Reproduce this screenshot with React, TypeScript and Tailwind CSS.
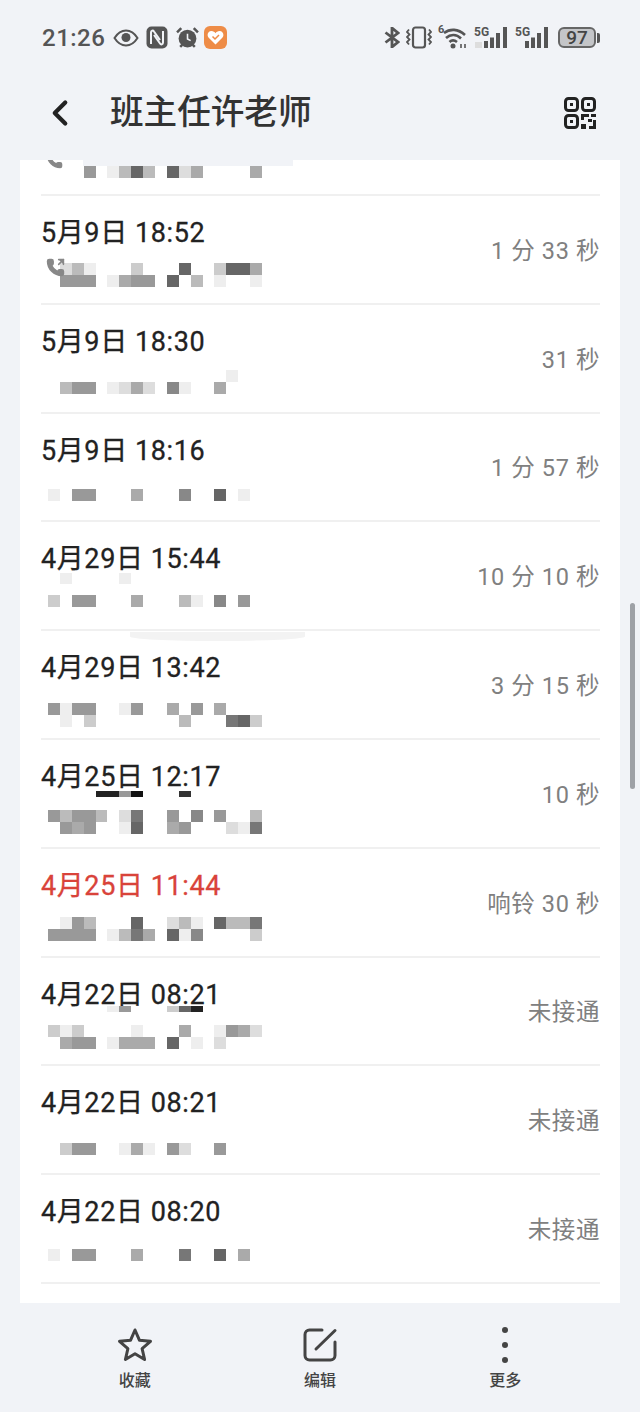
import { ChevronLeft, PhoneOutgoing } from "lucide-react";

type Line = [string, number];
type Call = { time: string; dur: string; top: number; lines: Line[]; missed?: boolean };

const calls: Call[] = [
  { time: "5月9日 18:52", dur: "1 分 33 秒", top: 15, lines: [[".dbe...c...6..c66a", 12], [".999.ea99.6fb.e..e", 12]] },
  { time: "5月9日 18:30", dur: "31 秒", top: 13, lines: [["f.f........f...ef.", 12], [".b99.edad.8e..a...", 12]] },
  { time: "5月9日 18:16", dur: "1 分 57 秒", top: 23, lines: [["e.99...a..f8f.6.e.", 12]] },
  { time: "4月29日 15:44", dur: "10 分 10 秒", top: -1, lines: [[".ef...e...........", 11], ["", 11], ["c.99...a..fbe.8.9.", 12]] },
  { time: "4月29日 13:42", dur: "3 分 15 秒", top: 20, lines: [["9e99ffe9..a.9.a...", 12], [".efc...f..fb...76c", 12]] },
  { time: "4月25日 12:17", dur: "10 秒", top: -1, lines: [["....2291..f3......", 6], ["", 13], ["9b99bfd7..9.8.9..b", 12], [".9a9.fe6..a9...de7", 12]] },
  { time: "4月25日 11:44", dur: "响铃 30 秒", top: 16, missed: true, lines: [[".e9bf.f6..dbe.6bb7", 12], ["9999.eb7a.6e8.f..c", 12]] },
  { time: "4月22日 08:21", dur: "未接通", top: -4, lines: [[".....e9...c62.....", 6], ["", 13], ["cecf...e...a..e9ad", 12], [".a99.eaaa.6fe.d...", 12]] },
  { time: "4月22日 08:21", dur: "未接通", top: 25, lines: [[".c99.feae.9d..9...", 12]] },
  { time: "4月22日 08:20", dur: "未接通", top: 22, lines: [["e.99...a..f7f.6.a.", 12]] },
];

// blurred-out number, one hex digit per cell = grey level
function Mosaic({ lines, top }: { lines: Line[]; top: number }) {
  return (
    <div className="ml-[7px] flex flex-col" style={{ marginTop: top }}>
      {lines.map(([cells, h], i) => (
        <div key={i} className="flex" style={{ height: h }}>
          {cells.split("").map((c, j) => (
            <div key={j} className="w-[11.9px]" style={{ backgroundColor: c === "." ? "transparent" : `#${c}${c}${c}` }} />
          ))}
        </div>
      ))}
    </div>
  );
}

function StatusLeft() {
  return (
    <div className="flex items-center">
      <span className="text-[24px] font-medium tracking-[0.5px] text-[#555]">21:26</span>
      <svg className="ml-[8px]" width="26" height="18" viewBox="0 0 26 18" fill="none">
        <path d="M1.5 9C5 3.5 9 1.5 13 1.5S21 3.5 24.500 9C21 14.500 17 16.500 13 16.500S5 14.500 1.500 9Z" stroke="#555" strokeWidth="2" />
        <circle cx="13" cy="8.500" r="4.500" fill="#555" />
      </svg>
      <svg className="ml-[7px]" width="22" height="23" viewBox="0 0 22 23" fill="none">
        <rect x="0.500" y="0.500" width="21" height="22" rx="5" fill="#555" />
        <path d="M5 18V6.500C5 4.500 7 4 8 5.500L14 14M17 5V16.500C17 18.500 15 19 14 17.500L8 9" stroke="#f1f3f7" strokeWidth="2" />
      </svg>
      <svg className="ml-[8px]" width="23" height="23" viewBox="0 0 22 22" fill="none">
        <circle cx="11" cy="12" r="8.500" fill="#555" />
        <path d="M11 7.500V12.500L14 14" stroke="#f1f3f7" strokeWidth="1.500" />
        <path d="M1 6L5 2M21 6L17 2M4 20L6 18M18 20L16 18" stroke="#555" strokeWidth="2.400" />
      </svg>
      <div className="ml-[5px] flex h-[23px] w-[23px] items-center justify-center rounded-[6px] bg-[#ee8c47]">
        <svg width="17" height="15" viewBox="0 0 17 15">
          <path d="M8.500 14.500L1.500 7.500C-.5 5 1 1 4.500 1C6.300 1 7.700 2 8.500 3.200C9.300 2 10.700 1 12.500 1C16 1 17.500 5 15.500 7.500Z" fill="#fff" />
          <path d="M5.500 6.500L8 9L12 5" stroke="#ee8c47" strokeWidth="1.500" fill="none" />
        </svg>
      </div>
    </div>
  );
}

function Signal({ idle }: { idle?: boolean }) {
  return (
    <div className="relative h-[22px] w-[35px]">
      <span className="absolute left-0 top-[-2px] text-[12px] font-bold leading-[14px] text-[#555]">5G</span>
      {idle && <span className="absolute left-[1px] top-[15px] h-[6px] w-[7px] bg-[#ddd]" />}
      <svg className="absolute right-0 top-0" width="26" height="22" viewBox="0 0 26 22" fill="#555">
        <rect x="1" y="14" width="4" height="7" />
        <rect x="7" y="10.500" width="4" height="10.500" />
        <rect x="13" y="6" width="4" height="15" />
        <rect x="20" y="0" width="4" height="21" />
      </svg>
    </div>
  );
}

function StatusRight() {
  return (
    <div className="flex items-center">
      <svg width="16" height="21" viewBox="0 0 16 21" fill="none" stroke="#555" strokeWidth="2.800">
        <path d="M1.500 5.500L14 15L8 20V1L14 6L1.500 15.500" />
      </svg>
      <svg className="ml-[6px]" width="26" height="23" viewBox="0 0 26 22" fill="none" stroke="#555" strokeWidth="1.800">
        <rect x="7" y="1" width="12" height="20" rx="2.500" strokeWidth="2.200" />
        <path d="M3 3L1 5.500L3.500 8L1 10.500L3.500 13L1 15.500L3 18" />
        <path d="M23 3L25 5.500L22.500 8L25 10.500L22.500 13L25 15.500L23 18" />
      </svg>
      <div className="relative ml-[6px] h-[22px] w-[30px]">
        <span className="absolute left-0 top-[-3px] text-[11px] font-bold leading-[12px] text-[#555]">6</span>
        <svg className="absolute left-0 top-0" width="30" height="22" viewBox="0 0 30 22" fill="none" stroke="#555" strokeWidth="2.600">
          <path d="M6 6C12 1.500 20 1.500 27 8" />
          <path d="M8 11C12.500 7 18.500 7 23 11.500" />
          <path d="M11.500 15C13.500 13 16.500 13 19 15" />
          <circle cx="15" cy="19" r="2.500" fill="#555" stroke="none" />
          <path d="M23 17V21M27 17V21" strokeWidth="1.600" />
        </svg>
      </div>
      <div className="ml-[6px]"><Signal idle /></div>
      <div className="ml-[6px]"><Signal /></div>
      <div className="ml-[8px] flex items-center">
        <div className="flex h-[21px] w-[38px] items-center justify-center rounded-[6px] border-2 border-[#666] bg-[#c4c5c8] text-[19px] font-medium leading-none text-[#444]">97</div>
        <div className="ml-[1px] h-[10px] w-[3px] rounded-r-[2px] bg-[#555]" />
      </div>
    </div>
  );
}

function QrIcon() {
  return (
    <svg width="32" height="32" viewBox="0 0 32 32" fill="none" stroke="#222" strokeWidth="3">
      <rect x="1.500" y="1.500" width="12" height="12" rx="3" />
      <rect x="18.500" y="1.500" width="12" height="12" rx="3" />
      <rect x="1.500" y="18.500" width="12" height="12" rx="3" />
      <g fill="#222" stroke="none">
        <rect x="6" y="6" width="3" height="3" />
        <rect x="23" y="6" width="3" height="3" />
        <rect x="6" y="23" width="3" height="3" />
        <path d="M17 17H25V20H20V23H17ZM27 17H32V20H27ZM24 22H28V25H24ZM29 23H32V32H25V29H29ZM17 27H22V32H17Z" />
      </g>
    </svg>
  );
}

function StarIcon() {
  return (
    <svg width="36" height="36" viewBox="0 0 36 36" fill="none" stroke="#444" strokeWidth="3" strokeLinejoin="round">
      <path d="M18 3L22.400 13.200L33.500 14.300L25.100 21.600L27.600 32.500L18 26.800L8.400 32.500L10.900 21.600L2.500 14.300L13.600 13.200Z" />
    </svg>
  );
}

function EditIcon() {
  return (
    <svg width="36" height="36" viewBox="0 0 36 36" fill="none" stroke="#444" strokeWidth="3" strokeLinecap="round">
      <path d="M20 3H7.500C5 3 3 5 3 7.500V28.500C3 31 5 33 7.500 33H28.500C31 33 33 31 33 28.500V15" />
      <path d="M33 3.500L14 22" />
    </svg>
  );
}

function More() {
  return (
    <div className="flex h-[36px] flex-col items-center justify-between">
      <span className="h-[6px] w-[6px] rounded-full bg-[#444]" />
      <span className="h-[6px] w-[6px] rounded-full bg-[#444]" />
      <span className="h-[6px] w-[6px] rounded-full bg-[#444]" />
    </div>
  );
}

export default function App() {
  return (
    <div className="relative flex h-[1412px] w-[640px] flex-col overflow-hidden bg-[#f1f3f7] [font-family:Roboto,'Noto_Sans_CJK_SC',sans-serif]">
      <div className="flex h-[75px] items-center justify-between pl-[42px] pr-[40px]">
        <StatusLeft />
        <StatusRight />
      </div>

      <div className="flex h-[85px] items-start justify-between pl-[42px] pr-[44px] pt-[17px]">
        <div className="flex items-center">
          <ChevronLeft size={42} strokeWidth={2.4} className="-ml-[3px] text-[#222]" />
          <h1 className="ml-[29px] text-[33.6px] font-medium leading-[38px] text-[#333]">班主任许老师</h1>
        </div>
        <div className="pt-[5px]"><QrIcon /></div>
      </div>

      <div className="relative mx-5 h-[1143px] overflow-hidden bg-white">
        <div className="ml-[21px] mr-[20px] flex h-[36px] border-b-2 border-[#f0f0f0]">
          <div className="mt-[6px] ml-[7px] flex h-[12px]">
            {"...9.eb6b.6da....a".split("").map((c, j) => (
              <div key={j} className="w-[11.9px]" style={{ backgroundColor: c === "." ? "transparent" : `#${c}${c}${c}` }} />
            ))}
          </div>
        </div>
        {calls.map((c, i) => (
          <div key={i} className="ml-[21px] mr-[20px] flex h-[108.8px] items-center justify-between border-b-2 border-[#f0f0f0]">
            <div className="flex h-full flex-col pt-[22px]">
              <div className={`h-[30px] whitespace-nowrap text-[27px] leading-[30px] tracking-[0.6px] [-webkit-text-stroke:0.3px] ${c.missed ? "text-[#d9433a]" : "text-[#222]"}`}>{c.time}</div>
              <Mosaic lines={c.lines} top={c.top} />
            </div>
            <div className="whitespace-nowrap pt-[4px] text-[23.5px] tracking-[0.6px] text-[#808080]">{c.dur}</div>
          </div>
        ))}
        {/* smudges left by the blur */}
        <div className="absolute left-[63px] top-0 h-[6px] w-[210px] bg-[#f1f3f7]" />
        <div className="absolute left-[110px] top-[472px] h-[9px] w-[175px] rounded-b-[50%] bg-[#f3f3f3]" />
        <PhoneOutgoing size={17} fill="#888" className="absolute left-[26px] top-[-8px] text-[#888]" />
        <PhoneOutgoing size={19} fill="#888" className="absolute left-[26px] top-[98px] text-[#888]" />
      </div>

      <div className="grid flex-1 grid-cols-3 px-[42px] pt-[22px]">
        {[
          { label: "收藏", icon: <StarIcon /> },
          { label: "编辑", icon: <EditIcon /> },
          { label: "更多", icon: <More /> },
        ].map((t) => (
          <div key={t.label} className="flex flex-col items-center text-[#444]">
            <div className="flex h-[40px] items-center">{t.icon}</div>
            <span className="mt-[5px] text-[16px] font-medium leading-[22px]">{t.label}</span>
          </div>
        ))}
      </div>

      <div className="absolute left-[630px] top-[603px] h-[186px] w-[5px] rounded-full bg-[#9ea1a6]" />
    </div>
  );
}
